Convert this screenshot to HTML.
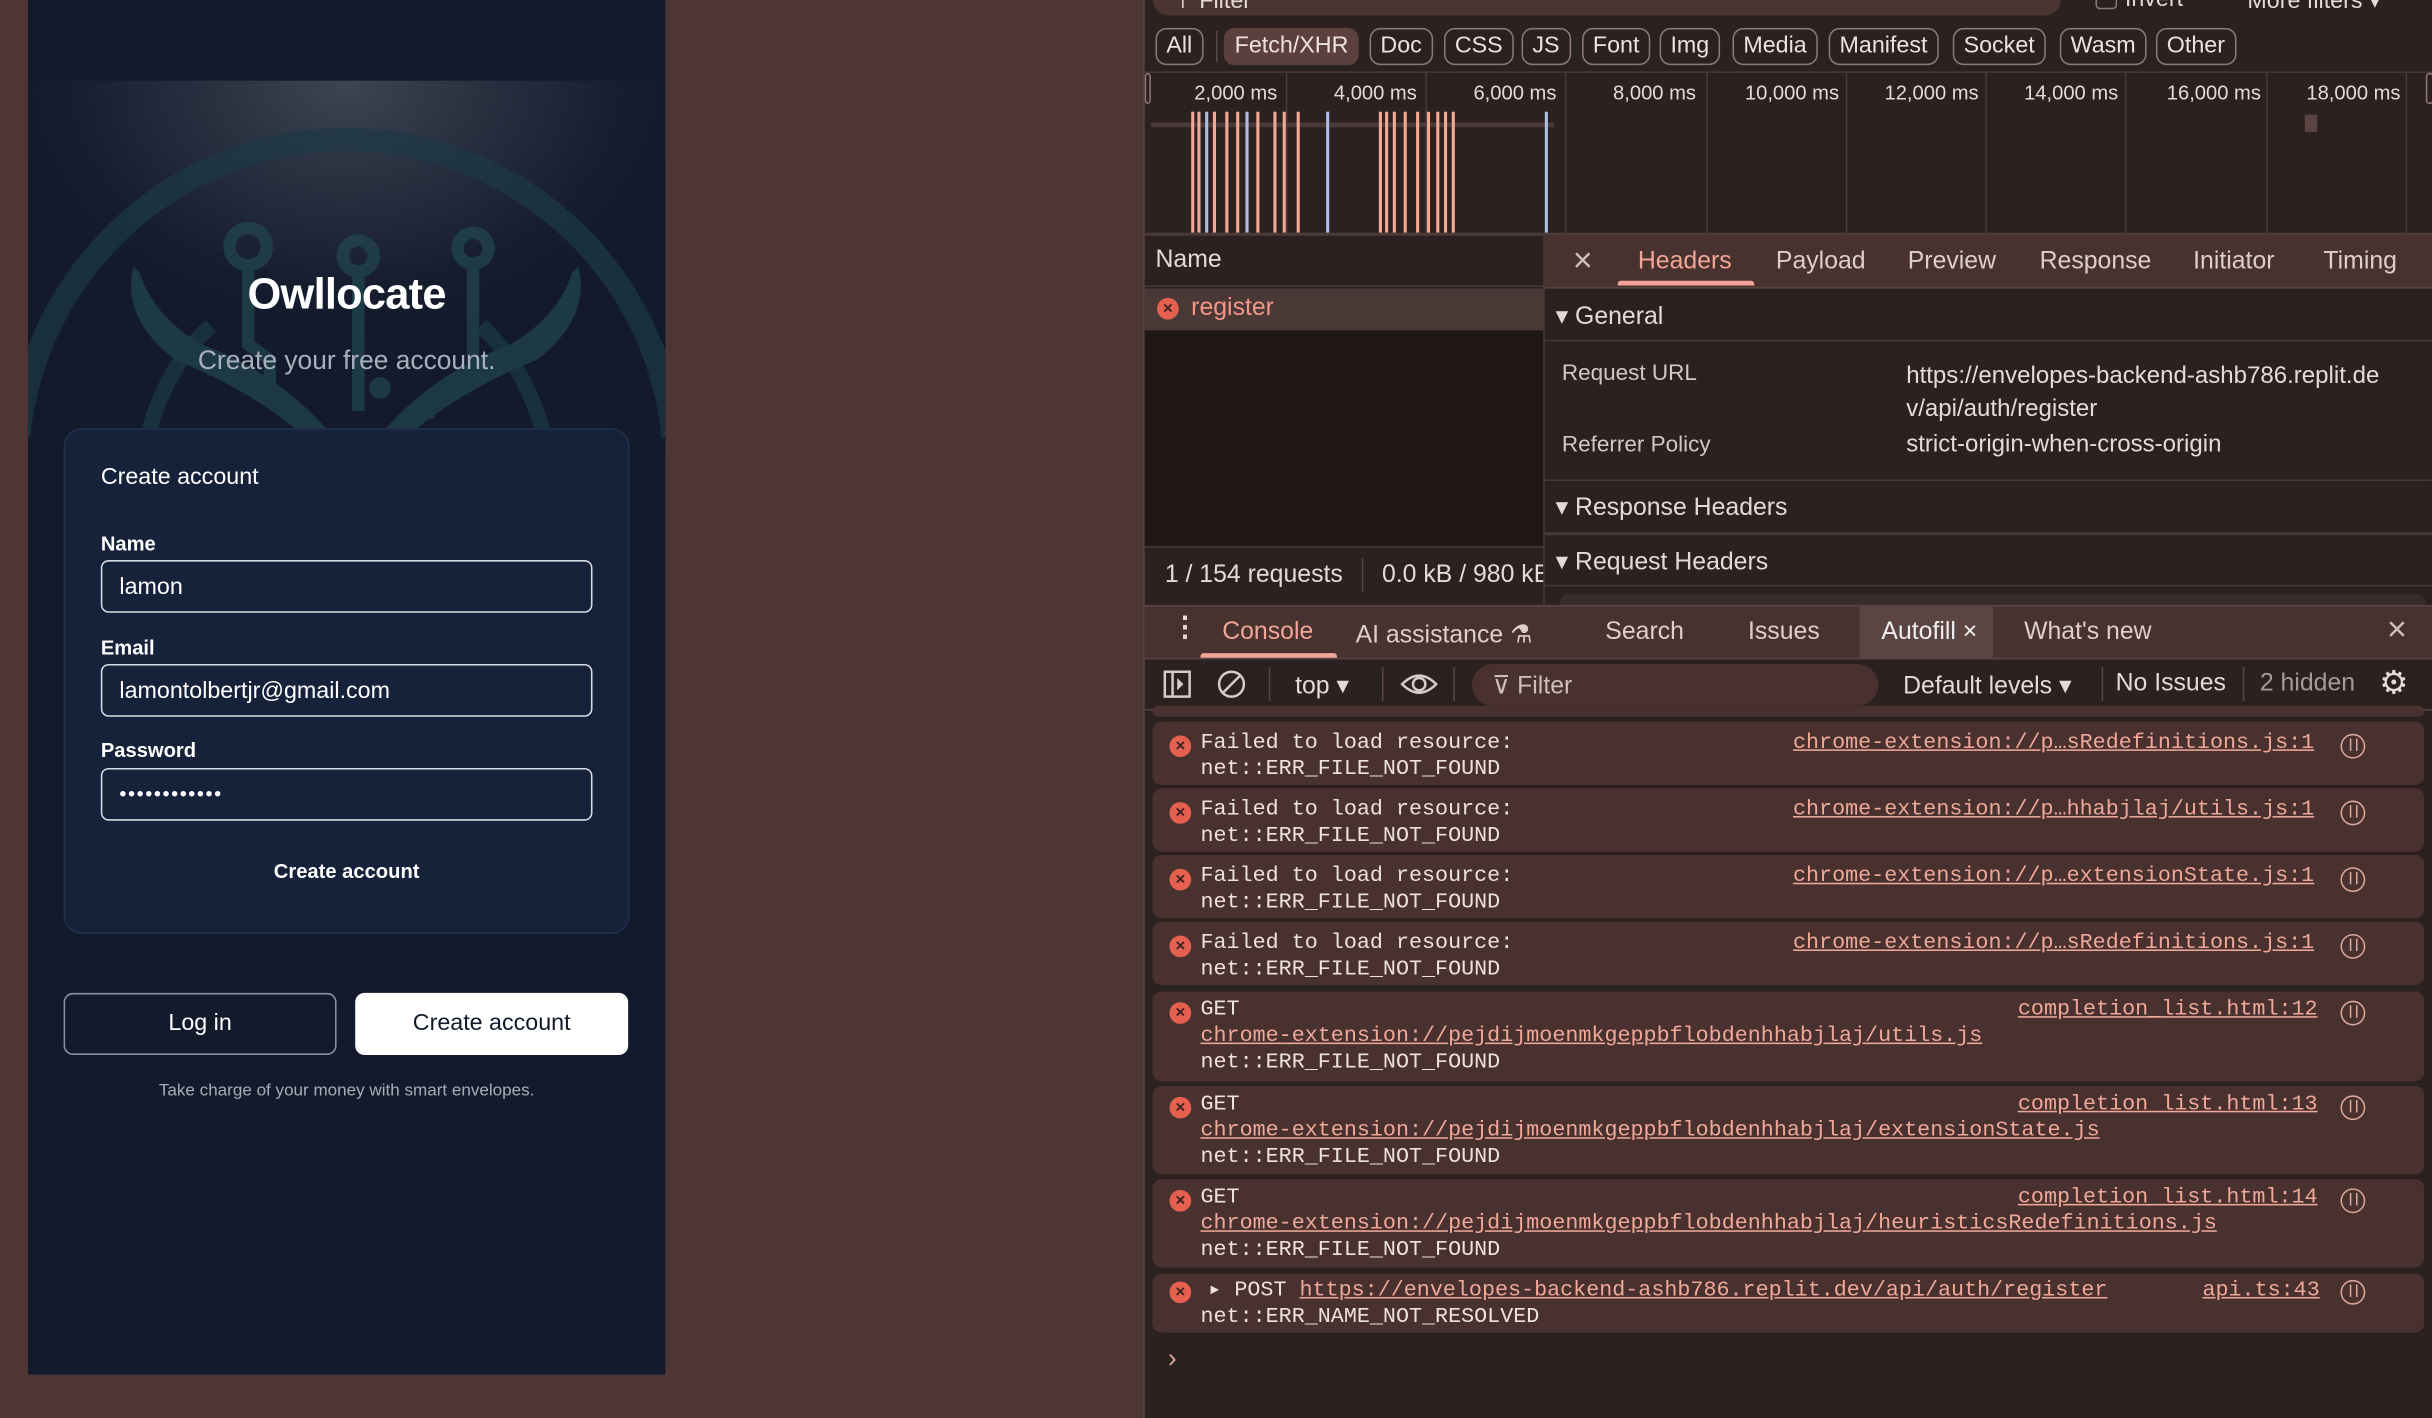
<!DOCTYPE html>
<html><head><meta charset="utf-8"><style>
*{margin:0;padding:0;box-sizing:border-box}
html,body{width:2432px;height:1418px;overflow:hidden;background:#4d3634}
#s{position:absolute;left:0;top:0;width:1568px;height:914px;transform:scale(1.55102,1.5514);transform-origin:0 0;font-family:"Liberation Sans",sans-serif}
.a{position:absolute;white-space:nowrap}
.app{left:18px;top:0;width:411px;height:886px;background:#121a2b;overflow:hidden}
.lbl{font-size:13px;font-weight:bold;color:#fff}
.inp{position:absolute;left:23px;width:317px;height:34px;border:1.5px solid #d8dce4;border-radius:5px;color:#fff;font-size:15px;padding:8px 11px}
.dt{left:737px;top:0;width:831px;height:914px;background:#2a2120;color:#e6dad7;overflow:hidden;border-left:1px solid #5a4543}
.chip{position:absolute;top:18px;height:24px;border:1px solid #8d7875;border-radius:7px;font-size:15px;line-height:22px;padding:0 6px;color:#eee2df}
.tab{position:absolute;font-size:16px;color:#dccfcc}
.row{position:absolute;left:5px;width:820px;background:#48312f;border-radius:6px}
.m{font-family:"Liberation Mono",monospace;font-size:14px;line-height:17px;color:#eee2df;position:absolute;white-space:nowrap}
.lk{color:#f0a898;text-decoration:underline}
.ei{position:absolute;left:11px;width:14px;height:14px;border-radius:50%;background:#e5604f;color:#3a2222;font-size:11px;line-height:14px;text-align:center;font-family:"Liberation Sans",sans-serif;font-weight:bold}
.ri{position:absolute;left:766px;width:16px;height:16px;border-radius:50%;border:1.5px solid #d9a79c}
.ri:after{content:"";position:absolute;left:5px;top:2px;width:3px;height:8px;border-left:1.5px solid #d9a79c;border-right:1.5px solid #d9a79c}
.gl{position:absolute;top:47px;width:1px;height:103px;background:#4a3a38}
.tl{position:absolute;top:52px;font-size:13px;color:#e6dad7}
.bar{position:absolute;top:72px;width:1.5px;height:78px;background:#f2a897}
</style></head><body><div id="s">

<div class="a app">
  <div class="a" style="left:0;top:52px;width:411px;height:240px;background:radial-gradient(ellipse 230px 170px at 205px 0px,#3d4552 0%,#283040 40%,#141c2e 80%,#121a2b 100%)"></div>
  <svg class="a" style="left:0;top:52px;opacity:0.7" width="411" height="230" viewBox="0 52 411 230">
    <g fill="none" stroke="#1d3a45" stroke-width="15">
      <circle cx="205" cy="302" r="212"/>
      <path d="M78 278 Q90 235 118 210" stroke-width="10"/>
      <path d="M332 278 Q320 235 292 210" stroke-width="10"/>
    </g>
    <g fill="#23484f">
      <path d="M68 172 Q60 205 95 232 Q140 250 172 276 L192 276 Q160 240 112 222 Q82 205 72 176Z"/>
      <path d="M355 172 Q363 205 328 232 Q283 250 251 276 L231 276 Q263 240 311 222 Q341 205 351 176Z"/>
    </g>
    <g fill="none" stroke="#23484f" stroke-width="8">
      <circle cx="142" cy="159" r="12"/><circle cx="213" cy="165" r="10"/><circle cx="287" cy="160" r="10"/>
      <path d="M142 171 V222 L156 232 V248"/><path d="M213 175 V265"/><path d="M287 170 V240 L258 262 V270"/>
    </g>
    <circle cx="227" cy="250" r="7" fill="#23484f"/>
  </svg>
  <div class="a" style="left:0;width:411px;top:174px;text-align:center;font-size:28px;font-weight:bold;color:#fff;letter-spacing:-0.5px">Owllocate</div>
  <div class="a" style="left:0;width:411px;top:223px;text-align:center;font-size:17px;color:#a9b0bd">Create your free account.</div>
  <div class="a" style="left:23px;top:276px;width:365px;height:326px;background:#16213a;border:1px solid #22304a;border-radius:12px">
    <div class="a" style="left:23px;top:22px;font-size:15px;color:#fff">Create account</div>
    <div class="a lbl" style="left:23px;top:66px">Name</div>
    <div class="inp" style="top:84px">lamon</div>
    <div class="a lbl" style="left:23px;top:133px">Email</div>
    <div class="inp" style="top:151px">lamontolbertjr@gmail.com</div>
    <div class="a lbl" style="left:23px;top:199px">Password</div>
    <div class="inp" style="top:218px;font-size:13px;letter-spacing:1px">••••••••••••</div>
    <div class="a" style="left:0;width:363px;top:277px;text-align:center;font-size:13px;font-weight:bold;color:#fff">Create account</div>
  </div>
  <div class="a" style="left:23px;top:640px;width:176px;height:40px;border:1px solid #8a909c;border-radius:6px;color:#fff;font-size:15px;text-align:center;line-height:38px">Log in</div>
  <div class="a" style="left:211px;top:640px;width:176px;height:40px;background:#fff;border-radius:6px;color:#111a2b;font-size:15px;text-align:center;line-height:40px">Create account</div>
  <div class="a" style="left:0;width:411px;top:697px;text-align:center;font-size:11px;color:#a6adb9">Take charge of your money with smart envelopes.</div>
</div>

<div class="a dt">
  <div class="a" style="left:5px;top:-12px;width:586px;height:22px;background:#4a3533;border-radius:11px"></div>
  <div class="a" style="left:18px;top:-9px;font-size:15px">⊤ Filter</div>
  <div class="a" style="left:613px;top:-8px;width:14px;height:14px;border:1px solid #8d7875;border-radius:3px"></div>
  <div class="a" style="left:632px;top:-9px;font-size:15px">Invert</div>
  <div class="a" style="left:711px;top:-9px;font-size:15px">More filters ▾</div>
  <div class="chip" style="left:7px">All</div>
  <div class="a" style="left:46px;top:20px;width:1px;height:20px;background:#5a4543"></div>
  <div class="chip" style="left:51px;background:#5c403d;border-color:#5c403d">Fetch/XHR</div>
  <div class="chip" style="left:145px">Doc</div>
  <div class="chip" style="left:193px">CSS</div>
  <div class="chip" style="left:243px">JS</div>
  <div class="chip" style="left:282px">Font</div>
  <div class="chip" style="left:332px">Img</div>
  <div class="chip" style="left:379px">Media</div>
  <div class="chip" style="left:441px">Manifest</div>
  <div class="chip" style="left:521px">Socket</div>
  <div class="chip" style="left:590px">Wasm</div>
  <div class="chip" style="left:652px">Other</div>
  <div class="a" style="left:0;top:46px;width:831px;height:1px;background:#4a3a38"></div>
  <div class="a" style="left:0;top:47px;width:4px;height:20px;border:1px solid #8d7875;border-radius:2px"></div>
  <div class="a" style="left:826px;top:47px;width:5px;height:20px;border:1px solid #8d7875;border-radius:2px"></div>
  <div class="gl" style="left:91px"></div><div class="gl" style="left:181px"></div><div class="gl" style="left:271px"></div><div class="gl" style="left:362px"></div><div class="gl" style="left:452px"></div><div class="gl" style="left:542px"></div><div class="gl" style="left:632px"></div><div class="gl" style="left:723px"></div><div class="gl" style="left:813px"></div>
  <div class="tl" style="left:32px">2,000 ms</div><div class="tl" style="left:122px">4,000 ms</div><div class="tl" style="left:212px">6,000 ms</div><div class="tl" style="left:302px">8,000 ms</div><div class="tl" style="left:387px">10,000 ms</div><div class="tl" style="left:477px">12,000 ms</div><div class="tl" style="left:567px">14,000 ms</div><div class="tl" style="left:659px">16,000 ms</div><div class="tl" style="left:749px">18,000 ms</div>
  <div class="a" style="left:4px;top:79px;width:260px;height:3px;background:#4a3a38"></div>
  <div class="bar" style="left:30px"></div><div class="bar" style="left:34px"></div><div class="bar" style="left:39px;background:#aebde8"></div><div class="bar" style="left:44px"></div><div class="bar" style="left:52px"></div><div class="bar" style="left:59px"></div><div class="bar" style="left:65px;background:#aebde8"></div><div class="bar" style="left:72px"></div><div class="bar" style="left:83px"></div><div class="bar" style="left:89px"></div><div class="bar" style="left:98px"></div><div class="bar" style="left:117px;background:#aebde8"></div><div class="bar" style="left:151px"></div><div class="bar" style="left:155px"></div><div class="bar" style="left:160px"></div><div class="bar" style="left:167px"></div><div class="bar" style="left:175px"></div><div class="bar" style="left:182px"></div><div class="bar" style="left:188px"></div><div class="bar" style="left:193px"></div><div class="bar" style="left:198px"></div><div class="bar" style="left:258px;background:#aebde8"></div>
  <div class="a" style="left:748px;top:74px;width:8px;height:11px;background:#5a4543"></div>
  <div class="a" style="left:0;top:150px;width:831px;height:2px;background:#4a3a38"></div>

  <div class="a" style="left:0;top:152px;width:257px;height:33px;border-bottom:1px solid #4a3a38"></div>
  <div class="a" style="left:7px;top:159px;font-size:16px">Name</div>
  <div class="a" style="left:0;top:186px;width:257px;height:27px;background:#4a3836"></div>
  <div class="ei" style="top:192px;left:8px">×</div>
  <div class="a" style="left:30px;top:190px;font-size:16px;color:#f29788">register</div>
  <div class="a" style="left:0;top:213px;width:257px;height:139px;background:#1f1817"></div>
  <div class="a" style="left:0;top:352px;width:257px;height:1px;background:#4a3a38"></div>
  <div class="a" style="left:13px;top:362px;font-size:16px">1 / 154 requests</div>
  <div class="a" style="left:140px;top:360px;width:1px;height:22px;background:#5a4543"></div>
  <div class="a" style="left:153px;top:362px;font-size:16px;width:104px;overflow:hidden">0.0 kB / 980 kB</div>

  <div class="a" style="left:257px;top:152px;width:574px;height:238px;border-left:1px solid #4a3a38"></div>
  <div class="a" style="left:258px;top:152px;width:573px;height:34px;background:#48322f;border-bottom:1px solid #5a4543"></div>
  <div class="a" style="left:276px;top:155px;font-size:22px;color:#cbbebb">×</div>
  <div class="tab" style="left:318px;top:160px;color:#f2a597">Headers</div>
  <div class="a" style="left:305px;top:181px;width:88px;height:3px;background:#f2a597;border-radius:2px 2px 0 0"></div>
  <div class="tab" style="left:407px;top:160px">Payload</div>
  <div class="tab" style="left:492px;top:160px">Preview</div>
  <div class="tab" style="left:577px;top:160px">Response</div>
  <div class="tab" style="left:676px;top:160px">Initiator</div>
  <div class="tab" style="left:760px;top:160px">Timing</div>
  <div class="a" style="left:265px;top:194px;font-size:16px">▾ General</div>
  <div class="a" style="left:258px;top:219px;width:573px;height:1px;background:#4a3a38"></div>
  <div class="a" style="left:269px;top:233px;font-size:14.5px;color:#d4c7c4">Request URL</div>
  <div class="a" style="left:491px;top:232px;font-size:15.5px;line-height:21px;white-space:normal;width:340px">https://envelopes-backend-ashb786.replit.de v/api/auth/register</div>
  <div class="a" style="left:269px;top:279px;font-size:14.5px;color:#d4c7c4">Referrer Policy</div>
  <div class="a" style="left:491px;top:278px;font-size:15.5px">strict-origin-when-cross-origin</div>
  <div class="a" style="left:258px;top:309px;width:573px;height:1px;background:#4a3a38"></div>
  <div class="a" style="left:265px;top:317px;font-size:16px">▾ Response Headers</div>
  <div class="a" style="left:258px;top:343px;width:573px;height:2px;background:#4a3a38"></div>
  <div class="a" style="left:265px;top:352px;font-size:16px">▾ Request Headers</div>
  <div class="a" style="left:258px;top:377px;width:573px;height:1px;background:#4a3a38"></div>
  <div class="a" style="left:268px;top:383px;width:558px;height:10px;background:#3a2c2b;border-radius:6px"></div>

  <div class="a" style="left:0;top:390px;width:831px;height:35px;background:#48322f;border-top:1px solid #5a4543;border-bottom:1px solid #5a4543"></div>
  <div class="a" style="left:17px;top:394px;font-size:18px;font-weight:bold">⋮</div>
  <div class="tab" style="left:50px;top:399px;color:#f2a597">Console</div>
  <div class="a" style="left:36px;top:421px;width:88px;height:3px;background:#f2a597;border-radius:2px 2px 0 0"></div>
  <div class="tab" style="left:136px;top:399px">AI assistance ⚗</div>
  <div class="tab" style="left:297px;top:399px">Search</div>
  <div class="tab" style="left:389px;top:399px">Issues</div>
  <div class="a" style="left:461px;top:391px;width:86px;height:33px;background:#5a4543"></div>
  <div class="tab" style="left:475px;top:399px;color:#eee">Autofill ×</div>
  <div class="tab" style="left:567px;top:399px">What's new</div>
  <div class="a" style="left:801px;top:393px;font-size:22px;color:#cbbebb">×</div>

  <svg class="a" style="left:11px;top:431px" width="20" height="20"><rect x="2" y="2" width="16" height="16" fill="none" stroke="#d8cbc8" stroke-width="1.6"/><line x1="7" y1="2" x2="7" y2="18" stroke="#d8cbc8" stroke-width="1.6"/><path d="M10 6 L14 10 L10 14Z" fill="#d8cbc8"/></svg>
  <svg class="a" style="left:46px;top:431px" width="20" height="20"><circle cx="10" cy="10" r="8" fill="none" stroke="#d8cbc8" stroke-width="1.6"/><line x1="4.5" y1="15.5" x2="15.5" y2="4.5" stroke="#d8cbc8" stroke-width="1.6"/></svg>
  <div class="a" style="left:80px;top:430px;width:1px;height:22px;background:#5a4543"></div>
  <div class="a" style="left:97px;top:432px;font-size:16px">top ▾</div>
  <div class="a" style="left:153px;top:430px;width:1px;height:22px;background:#5a4543"></div>
  <svg class="a" style="left:164px;top:430px" width="26" height="22"><path d="M2 11 Q13 0 24 11 Q13 22 2 11Z" fill="none" stroke="#d8cbc8" stroke-width="1.6"/><circle cx="13" cy="11" r="4" fill="none" stroke="#d8cbc8" stroke-width="1.6"/></svg>
  <div class="a" style="left:199px;top:430px;width:1px;height:22px;background:#5a4543"></div>
  <div class="a" style="left:211px;top:428px;width:262px;height:27px;background:#48312f;border-radius:14px"></div>
  <div class="a" style="left:224px;top:432px;font-size:16px;color:#cbbebb">⊽ Filter</div>
  <div class="a" style="left:489px;top:432px;font-size:16px">Default levels ▾</div>
  <div class="a" style="left:617px;top:430px;width:1px;height:22px;background:#5a4543"></div>
  <div class="a" style="left:626px;top:432px;font-size:16px">No Issues</div>
  <div class="a" style="left:708px;top:430px;width:1px;height:22px;background:#5a4543"></div>
  <div class="a" style="left:719px;top:432px;font-size:16px;color:#a8999a">2 hidden</div>
  <div class="a" style="left:796px;top:428px;font-size:21px">⚙</div>
  <div class="a" style="left:0;top:457px;width:831px;height:1px;background:#5a4543"></div>
  <div class="row" style="top:455px;height:7px"></div>

  <div class="row" style="top:465px;height:41px"><div class="ei" style="top:9px">×</div><div class="m" style="left:31px;top:6px">Failed to load resource:<br>net::ERR_FILE_NOT_FOUND</div><div class="m lk" style="left:413px;top:6px">chrome-extension://p…sRedefinitions.js:1</div><div class="ri" style="top:8px"></div></div>
  <div class="row" style="top:508px;height:41px"><div class="ei" style="top:9px">×</div><div class="m" style="left:31px;top:6px">Failed to load resource:<br>net::ERR_FILE_NOT_FOUND</div><div class="m lk" style="left:413px;top:6px">chrome-extension://p…hhabjlaj/utils.js:1</div><div class="ri" style="top:8px"></div></div>
  <div class="row" style="top:551px;height:41px"><div class="ei" style="top:9px">×</div><div class="m" style="left:31px;top:6px">Failed to load resource:<br>net::ERR_FILE_NOT_FOUND</div><div class="m lk" style="left:413px;top:6px">chrome-extension://p…extensionState.js:1</div><div class="ri" style="top:8px"></div></div>
  <div class="row" style="top:594px;height:41px"><div class="ei" style="top:9px">×</div><div class="m" style="left:31px;top:6px">Failed to load resource:<br>net::ERR_FILE_NOT_FOUND</div><div class="m lk" style="left:413px;top:6px">chrome-extension://p…sRedefinitions.js:1</div><div class="ri" style="top:8px"></div></div>
  <div class="row" style="top:639px;height:58px"><div class="ei" style="top:7px">×</div><div class="m" style="left:31px;top:4px">GET<br><span class="lk">chrome-extension://pejdijmoenmkgeppbflobdenhhabjlaj/utils.js</span><br>net::ERR_FILE_NOT_FOUND</div><div class="m lk" style="left:558px;top:4px">completion_list.html:12</div><div class="ri" style="top:6px"></div></div>
  <div class="row" style="top:700px;height:57px"><div class="ei" style="top:7px">×</div><div class="m" style="left:31px;top:4px">GET<br><span class="lk">chrome-extension://pejdijmoenmkgeppbflobdenhhabjlaj/extensionState.js</span><br>net::ERR_FILE_NOT_FOUND</div><div class="m lk" style="left:558px;top:4px">completion_list.html:13</div><div class="ri" style="top:6px"></div></div>
  <div class="row" style="top:760px;height:57px"><div class="ei" style="top:7px">×</div><div class="m" style="left:31px;top:4px">GET<br><span class="lk">chrome-extension://pejdijmoenmkgeppbflobdenhhabjlaj/heuristicsRedefinitions.js</span><br>net::ERR_FILE_NOT_FOUND</div><div class="m lk" style="left:558px;top:4px">completion_list.html:14</div><div class="ri" style="top:6px"></div></div>
  <div class="row" style="top:821px;height:38px"><div class="ei" style="top:5px">×</div><div class="m" style="left:36px;top:3px">▸ POST <span class="lk">https://envelopes-backend-ashb786.replit.dev/api/auth/register</span></div><div class="m" style="left:31px;top:20px">net::ERR_NAME_NOT_RESOLVED</div><div class="m lk" style="left:677px;top:3px">api.ts:43</div><div class="ri" style="top:4px"></div></div>
  <div class="a" style="left:15px;top:866px;font-size:17px;color:#d9a79c">›</div>
</div>
</div></body></html>
